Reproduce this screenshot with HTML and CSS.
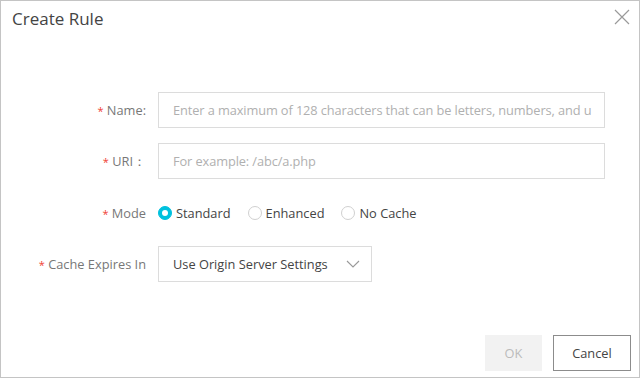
FILE: index.html
```html
<!DOCTYPE html>
<html>
<head>
<meta charset="utf-8">
<link rel="stylesheet" href="styles.css">
</head>
<body>
<div class="dialog">
  <div class="header">
    <div class="title">Create Rule</div>
    <button class="close" aria-label="Close">
      <svg width="16" height="16" viewBox="0 0 16 16"><path d="M1 1L15 15M15 1L1 15" stroke="#9a9a9a" stroke-width="1.2" fill="none"/></svg>
    </button>
  </div>
  <div class="body">
    <div class="row">
      <label class="label"><span class="req">*</span> Name:</label>
      <div class="input wide"><span class="ph">Enter a maximum of 128 characters that can be letters, numbers, and u</span></div>
    </div>
    <div class="row">
      <label class="label"><span class="req">*</span> URI：</label>
      <div class="input wide"><span class="ph">For example: /abc/a.php</span></div>
    </div>
    <div class="row">
      <label class="label"><span class="req">*</span> Mode</label>
      <div class="radios">
        <span class="radio checked"><span class="dot"></span>Standard</span>
        <span class="radio"><span class="dot"></span>Enhanced</span>
        <span class="radio"><span class="dot"></span>No Cache</span>
      </div>
    </div>
    <div class="row">
      <label class="label"><span class="req">*</span> Cache Expires In</label>
      <div class="input select"><span class="val">Use Origin Server Settings</span>
        <svg width="14" height="8" viewBox="0 0 14 8"><path d="M1 1L7 7L13 1" stroke="#999" stroke-width="1.1" fill="none"/></svg>
      </div>
    </div>
  </div>
  <div class="footer">
    <button class="btn ok">OK</button>
    <button class="btn cancel">Cancel</button>
  </div>
</div>
</body>
</html>
```
FILE: styles.css
```css
* { box-sizing: border-box; }
html, body { margin: 0; padding: 0; background: #fff; }
body { font-family: "Open Sans", "Noto Sans", sans-serif; font-size: 12.8px; color: #444; }
.dialog {
  width: 640px; height: 378px;
  border: 1px solid #c4c4c4;
  display: flex; flex-direction: column;
  background: #fff;
}
.header {
  display: flex; justify-content: space-between; align-items: flex-start;
  padding: 6px 9px 0 11px;
  height: 91px;
}
.title { font-size: 17px; color: #444; line-height: 24px; }
.close {
  border: 0; background: none; padding: 0; margin-top: 2px;
  width: 16px; height: 16px; display: flex;
}
.body { display: flex; flex-direction: column; gap: 15px; flex: 1; }
.row { display: flex; align-items: center; height: 36px; }
.row:nth-child(3) { margin-top: 1px; }
.label {
  width: 145px; text-align: right; color: #777;
  margin-right: 12px; white-space: nowrap;
}
.req { color: #f04134; font-size: 11px; }
.input {
  height: 36px; border: 1px solid #dcdcdc; display: flex; align-items: center;
  padding: 0 14px; overflow: hidden; white-space: nowrap;
}
.wide { width: 447px; }
.ph { color: #b0b0b0; letter-spacing: -0.1px; }
.radios { display: flex; align-items: center; }
.radio { display: flex; align-items: center; color: #444; margin-right: 17px; }
.dot {
  width: 14px; height: 14px; border-radius: 50%; border: 1px solid #d0d0d0;
  margin-right: 4px; background: #fff; position: relative;
}
.radio.checked .dot { background: #00c1de; border-color: #00c1de; }
.radio.checked .dot::after {
  content: ""; position: absolute; left: 3px; top: 3px; width: 6px; height: 6px;
  border-radius: 50%; background: #fff;
}
.select { width: 214px; justify-content: space-between; padding-right: 11px; }
.val { color: #444; }
.footer {
  display: flex; justify-content: flex-end; gap: 11px;
  padding: 0 8px 6px 0;
}
.btn {
  height: 36px; font-family: inherit; font-size: 12.8px; padding: 0; cursor: pointer;
}
.ok { width: 57px; background: #f2f2f2; border: 0; color: #bbb; }
.cancel { width: 78px; background: #fff; border: 1px solid #8c8c8c; color: #444; }
```
